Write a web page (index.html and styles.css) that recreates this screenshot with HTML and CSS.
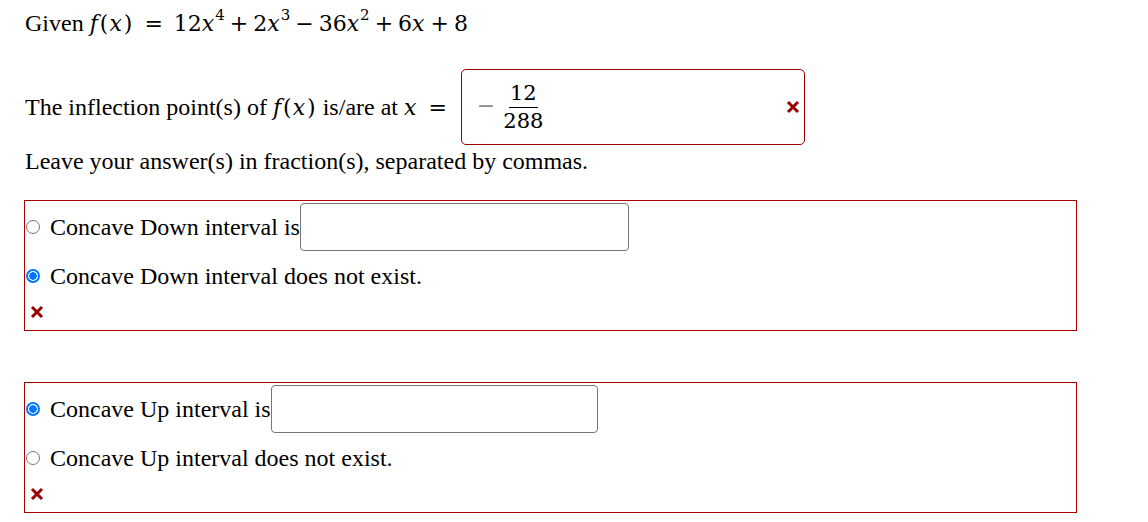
FILE: index.html
```html
<!DOCTYPE html>
<html>
<head>
<meta charset="utf-8">
<link rel="stylesheet" href="styles.css">
</head>
<body>
<div class="page">
  <div class="line l1">Given <span class="math"><i>f</i><span class="p">(</span><i>x</i><span class="p">)</span><span class="op rel">=</span>12<i>x</i><sup>4</sup><span class="op">+</span>2<i>x</i><sup>3</sup><span class="op">−</span>36<i>x</i><sup>2</sup><span class="op">+</span>6<i>x</i><span class="op">+</span>8</span></div>

  <div class="line l2">
    <span>The inflection point(s) of <span class="math"><i>f</i><span class="p">(</span><i>x</i><span class="p">)</span></span> is/are at <span class="math"><i>x</i><span class="op rel">=</span></span></span>
    <div class="answer">
      <span class="minus">−</span>
      <span class="frac"><span class="num">12</span><span class="den">288</span></span>
      <svg class="xmark xr" viewBox="0 0 14 14"><path d="M2 2L12 12M12 2L2 12" /></svg>
    </div>
  </div>

  <div class="line l3">Leave your answer(s) in fraction(s), separated by commas.</div>

  <div class="box b1">
    <div class="row r1"><input type="radio" name="d" class="rad"><span>Concave Down interval is</span><input type="text" class="field"></div>
    <div class="row r2"><input type="radio" name="d" class="rad" checked><span>Concave Down interval does not exist.</span></div>
    <div class="mark"><svg class="xmark" viewBox="0 0 14 14"><path d="M2 2L12 12M12 2L2 12" /></svg></div>
  </div>

  <div class="box b2">
    <div class="row r1"><input type="radio" name="u" class="rad" checked><span>Concave Up interval is</span><input type="text" class="field f2"></div>
    <div class="row r2"><input type="radio" name="u" class="rad"><span>Concave Up interval does not exist.</span></div>
    <div class="mark"><svg class="xmark" viewBox="0 0 14 14"><path d="M2 2L12 12M12 2L2 12" /></svg></div>
  </div>
</div>
</body>
</html>
```

FILE: styles.css
```css
html, body {
  margin: 0;
  padding: 0;
  background: #fff;
}
.page {
  padding: 8px 0 0 25px;
  font-family: "Liberation Serif", "Times New Roman", serif;
  font-size: 24px;
  color: #000;
}
.line {
  line-height: 30px;
  height: 30px;
  white-space: nowrap;
}
.math {
  font-family: "DejaVu Serif", "Liberation Serif", serif;
  font-size: 22px;
  line-height: 20px;
}
.math i {
  font-style: italic;
  padding-right: 1px;
}
.math sup {
  font-size: 15px;
  vertical-align: 11px;
  line-height: 0;
}
.math .p {
  padding: 0 1px;
}
.math .op {
  padding: 0 5px;
}
.math .rel {
  padding: 0 11px;
}
.l2 {
  display: flex;
  align-items: center;
  margin-top: 31px;
  height: 76px;
}
.answer {
  width: 327px;
  height: 74px;
  margin-left: 3px;
  border: 1px solid #990000;
  border-radius: 5px;
  display: flex;
  align-items: center;
  padding-left: 15px;
  box-sizing: content-box;
}
.minus {
  color: #8a8a8a;
  font-family: "DejaVu Serif", serif;
  font-size: 22px;
  margin-right: 8px;
  margin-top: -2px;
}
.frac {
  display: inline-flex;
  flex-direction: column;
  align-items: center;
  font-family: "DejaVu Serif", "Liberation Serif", serif;
  font-size: 21px;
  line-height: 25px;
}
.num {
  border-bottom: 1.5px solid #000;
  padding: 0 1px 1px;
}
.den {
  padding-top: 1px;
}
.xmark {
  width: 14px;
  height: 14px;
  display: block;
}
.xmark path {
  stroke: #990000;
  stroke-width: 3;
  fill: none;
}
.xr {
  margin-left: auto;
  margin-right: 4px;
}
.l3 {
  margin-top: 1px;
}
.box {
  width: 1051px;
  margin-left: -1px;
  border: 1px solid #aa0000;
  padding: 2px 0 6px 0;
}
.b1 {
  margin-top: 24px;
}
.b2 {
  margin-top: 51px;
}
.row {
  display: flex;
  align-items: center;
  line-height: 30px;
  white-space: nowrap;
}
.r2 {
  margin-top: 10px;
}
.rad {
  -webkit-appearance: none;
  appearance: none;
  width: 14px;
  height: 14px;
  margin: 0 10px 0 1px;
  border: 1px solid #767676;
  border-radius: 50%;
  box-sizing: border-box;
  background: #fff;
}
.rad:checked {
  border: 2px solid #0075ff;
  background: radial-gradient(circle, #0075ff 0 3.5px, #fff 4px);
}
.field {
  width: 329px;
  height: 48px;
  box-sizing: border-box;
  border: 1px solid #767676;
  border-radius: 4px;
  margin: 0;
  padding: 0;
}
.f2 {
  width: 327px;
}
.mark {
  margin-top: 14px;
  padding-left: 5px;
  height: 19px;
}
```
